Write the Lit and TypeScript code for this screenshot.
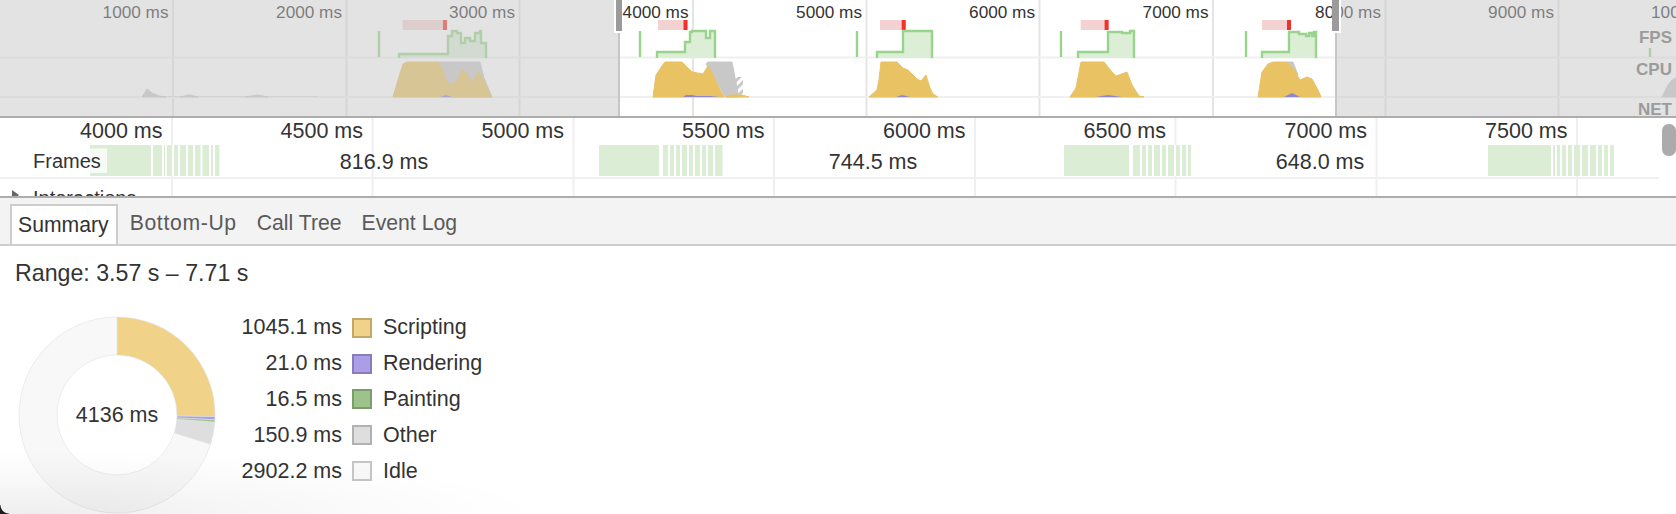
import { LitElement, html, svg, css } from "lit";
import { customElement } from "lit/decorators.js";

const overviewLines = [173, 346.5, 519.5, 693, 866.5, 1039.5, 1213, 1385.5, 1558.5, 1731];
const overviewLabels = overviewLines.map((x, i) => ({ x: x - 4.5, t: `${(i + 1) * 1000} ms` }));

const fps = [
  "M399 58V54H448V36H452V31H457V33H461V43H465V38H470V41H475V33H480V31H481V43H486V58",
  "M657 58V52H685V42H690V32H692V31H706V38H710V31H715V58",
  "M877 58V52H903V31H932V58",
  "M1078 58V52H1108V32H1122V33H1130V31H1134V58",
  "M1262 58V52H1289V32H1299V34H1306V36H1309V33H1312V36H1314V32H1316V58",
];
const spikes = [379, 640, 857, 1061, 1246, 1650];
const redBars = [
  [402.5, 447],
  [658, 687.5],
  [880, 905.7],
  [1080.7, 1108.6],
  [1262, 1291],
];

const yellow = [
  "393 97 398 80 403 64 407 62 438 62 443 70 447 83 453 84 458 79 462 70 466 72 473 83 478 71 484 80 489 92 492 97",
  "653 97 656 75 662 66 665 62 682 62 692 72 703 74 708 66 713 75 720 90 724 97",
  "869 97 877 90 879 80 881 62 897 62 903 68 908 70 917 79 921 81 926 75 930 88 933 94 938 97",
  "1070 97 1076 88 1081 62 1104 62 1112 72 1116 76 1127 72 1132 85 1139 96 1144 97",
  "1258 97 1262 72 1268 64 1273 62 1287 62 1293 68 1300 80 1307 77 1312 79 1318 90 1321 97",
  "726 97 731 95 742 95 749 97",
];
const grey = [
  "142 97 147 89 152 93 159 96 166 97",
  "180 97 189 95 198 97",
  "245 97 257 95 268 97",
  "160 97 160 96.4 318 96.4 318 97",
  "437 62 480 62 484 78 492 97 440 97",
  "706 64 708 62 732 62 738 93 739 97 725 97 713 75",
  "1287 62 1293 62 1298 75 1293 72",
  "1662 97 1668 85 1672 80 1676 78 1676 97",
];
const purple = [
  "683 97 686 95 692 95 697 96 710 96 720 97",
  "896 97 902 95 910 97",
  "1096 97 1108 95 1122 97",
  "1284 97 1292 93 1300 97",
  "440 97 446 95 452 97",
];

const rulerLines = [172, 372.5, 573.5, 774, 975, 1175.5, 1376.5, 1577];
const rulerLabels = rulerLines.map((x, i) => ({ x: x - 9.5, t: `${4000 + i * 500} ms` }));
const frameGroups = [
  { start: 90, end: 219.5, gaps: [151, 162, 165, 172, 178, 186, 193, 200.5, 209, 213] },
  { start: 599, end: 722.5, gaps: [659, 661, 668, 674, 680, 687, 693, 700, 706, 713] },
  { start: 1064, end: 1191, gaps: [1129, 1131, 1140, 1146, 1152, 1160, 1166, 1174, 1180, 1186] },
  { start: 1488, end: 1614, gaps: [1551, 1555, 1560, 1566, 1572, 1580, 1588, 1596, 1602, 1608] },
];
const durations = [
  { x: 384, t: "816.9 ms" },
  { x: 873, t: "744.5 ms" },
  { x: 1320, t: "648.0 ms" },
];

const legend = [
  { v: 1045.1, n: "Scripting", f: "#f0d289", b: "#c4a866" },
  { v: 21.0, n: "Rendering", f: "#ab9de6", b: "#8a7cb8" },
  { v: 16.5, n: "Painting", f: "#9dc28b", b: "#7e9b70" },
  { v: 150.9, n: "Other", f: "#dedede", b: "#b2b2b2" },
  { v: 2902.2, n: "Idle", f: "#f8f8f8", b: "#c5c5c5" },
];

function arc(a0: number, a1: number) {
  const R = 98, r = 60, c = 100;
  const pt = (rad: number, a: number) => `${(c + rad * Math.sin(a)).toFixed(2)} ${(c - rad * Math.cos(a)).toFixed(2)}`;
  const large = a1 - a0 > Math.PI ? 1 : 0;
  return `M${pt(R, a0)}A${R} ${R} 0 ${large} 1 ${pt(R, a1)}L${pt(r, a1)}A${r} ${r} 0 ${large} 0 ${pt(r, a0)}Z`;
}

@customElement("app-root")
export class AppRoot extends LitElement {
  static styles = css`
    :host {
      display: block;
      position: relative;
      width: 1676px;
      height: 514px;
      overflow: hidden;
      background: #fff;
      font-family: "Liberation Sans", Arial, sans-serif;
      color: #333;
    }
    svg { display: block; }
    .overview { border-bottom: 2px solid #adadad; }
    .ov-label { font-size: 17.2px; fill: #333; text-anchor: end; }
    .ov-name { font-size: 17px; font-weight: 700; fill: #9b9b9b; text-anchor: end; }
    .ov-line { stroke: #e4e4e4; stroke-width: 2; }
    .ov-h { stroke: #f0f0f0; stroke-width: 2; }
    .fps { fill: #dcefd6; stroke: #98d48c; stroke-width: 2.4; }
    .spike { stroke: #98d48c; stroke-width: 2.4; }
    .pink { fill: #f5d2d2; }
    .red { fill: #f2312a; }
    .yellow { fill: #e8c263; stroke: #e8c263; stroke-width: 1; stroke-linejoin: round; }
    .grey { fill: #c8c8c8; stroke: #c8c8c8; stroke-width: 1; stroke-linejoin: round; }
    .grey-thin { fill: #c8c8c8; }
    .purple { fill: #8f86cc; }
    .hatch { fill: url(#hatch); }
    .dim { fill: rgba(200, 200, 200, 0.5); }
    .edge { stroke: #c6c6c6; stroke-width: 2; }
    .grip-bg { fill: #fff; }
    .grip { fill: #9b9b9b; }

    .timeline { border-bottom: 2px solid #adadad; }
    .tl-line { stroke: #efefef; stroke-width: 2; }
    .tl-sep { stroke: #f0f0f0; stroke-width: 2; }
    .tl-label { font-size: 21.5px; fill: #333; text-anchor: end; }
    .tl-dur { font-size: 21.5px; fill: #333; text-anchor: middle; }
    .tl-name { font-size: 20px; fill: #333; }
    .frame { fill: #dcedd6; }
    .frame-gap { fill: #fff; }
    .label-bg { fill: rgba(255, 255, 255, 0.75); }
    .tri { fill: #666; }
    .scroll { fill: #ababab; }

    .tabs {
      display: flex;
      align-items: flex-end;
      box-sizing: border-box;
      height: 48px;
      padding-left: 10px;
      background: #f3f3f3;
      border-bottom: 2px solid #cdcdcd;
      font-size: 21.2px;
      color: #5a5a5a;
    }
    .tab {
      box-sizing: border-box;
      height: 42px;
      margin-bottom: -2px;
      padding: 0 10px;
      line-height: 38px;
      white-space: nowrap;
    }
    .tab.wide { letter-spacing: 0.65px; }
    .tab.active {
      color: #333;
      background: #fff;
      border: 2px solid #cdcdcd;
      padding: 0 7px 0 6px;
      margin-right: 2px;
    }
    .content { padding: 12px 0 0 15px; }
    .range { font-size: 23.2px; line-height: 30px; color: #333; white-space: nowrap; }
    .summary { display: flex; align-items: flex-start; margin-top: 22px; }
    .donut { position: relative; flex: none; width: 200px; height: 200px; margin: 5px 0 0 2px; }
    .donut-total {
      position: absolute;
      inset: 0;
      display: flex;
      align-items: center;
      justify-content: center;
      font-size: 21.5px;
      color: #333;
    }
    .seg { stroke: #e0e0e0; stroke-width: 0.6; }
    .legend {
      display: grid;
      grid-template-columns: 125px 20px auto;
      grid-auto-rows: 35.8px;
      align-items: center;
      font-size: 21.5px;
    }
    .val { text-align: right; white-space: nowrap; color: #333; }
    .swatch {
      box-sizing: border-box;
      width: 20px;
      height: 20px;
      margin-left: 10px;
      border: 2px solid;
    }
    .name { margin-left: 21px; white-space: nowrap; color: #333; }
    .shadow {
      position: absolute;
      left: 0;
      bottom: 0;
      width: 560px;
      height: 68px;
      pointer-events: none;
      background: radial-gradient(ellipse 510px 64px at 30px 100%, rgba(0, 0, 0, 0.065), rgba(0, 0, 0, 0.04) 35%, rgba(0, 0, 0, 0.016) 70%, rgba(0, 0, 0, 0) 100%);
    }
    .corner {
      position: absolute;
      left: 0;
      bottom: 0;
      width: 9px;
      height: 9px;
      background: radial-gradient(circle 9px at 100% 0, transparent 8px, #1a1a1a 9px);
    }
  `;

  private overview() {
    return html`<svg class="overview" width="1676" height="116" viewBox="0 0 1676 116">
      <defs>
        <pattern id="hatch" width="6" height="6" patternUnits="userSpaceOnUse" patternTransform="rotate(-45)">
          <rect width="6" height="3" fill="#c8c8c8"></rect>
        </pattern>
      </defs>
      ${overviewLines.map((x) => svg`<line class="ov-line" x1=${x} x2=${x} y1="0" y2="116"></line>`)}
      <line class="ov-h" x1="0" x2="1676" y1="57.5" y2="57.5"></line>
      <line class="ov-h" x1="0" x2="1676" y1="97" y2="97"></line>
      ${overviewLabels.map((l) => svg`<text class="ov-label" x=${l.x} y="18">${l.t}</text>`)}
      ${redBars.map(([a, b]) => svg`
        <rect class="pink" x=${a} y="20" width=${b - a} height="10"></rect>
        <rect class="red" x=${b - 4} y="20" width="4" height="10"></rect>`)}
      ${spikes.map((x, i) => svg`<line class="spike" x1=${x} x2=${x} y1=${i === 5 ? 48 : 31} y2="57"></line>`)}
      ${fps.map((d) => svg`<path class="fps" d=${d}></path>`)}
      ${grey.map((p) => svg`<polygon class=${p.includes("96.4") ? "grey-thin" : "grey"} points=${p}></polygon>`)}
      <polygon class="hatch" points="736 77 743 77 743 95 736 95"></polygon>
      ${yellow.map((p) => svg`<polygon class="yellow" points=${p}></polygon>`)}
      ${purple.map((p) => svg`<polygon class="purple" points=${p}></polygon>`)}
      <rect class="dim" x="0" y="0" width="619" height="116"></rect>
      <rect class="dim" x="1336" y="0" width="340" height="116"></rect>
      <line class="edge" x1="619" x2="619" y1="0" y2="116"></line>
      <line class="edge" x1="1336" x2="1336" y1="0" y2="116"></line>
      <rect class="grip-bg" x="614" y="0" width="8" height="33"></rect>
      <rect class="grip" x="616" y="0" width="6" height="31"></rect>
      <rect class="grip-bg" x="1332" y="0" width="9" height="33"></rect>
      <rect class="grip" x="1332" y="0" width="7" height="31"></rect>
      <text class="ov-name" x="1672" y="43">FPS</text>
      <text class="ov-name" x="1672" y="75">CPU</text>
      <text class="ov-name" x="1672" y="115">NET</text>
    </svg>`;
  }

  private timeline() {
    return html`<svg class="timeline" width="1676" height="78" viewBox="0 118 1676 78">
      ${rulerLines.map((x) => svg`<line class="tl-line" x1=${x} x2=${x} y1="118" y2="196"></line>`)}
      <line class="tl-sep" x1="0" x2="1659" y1="178" y2="178"></line>
      ${rulerLabels.map((l) => svg`<text class="tl-label" x=${l.x} y="138">${l.t}</text>`)}
      ${frameGroups.map((g) => svg`
        <rect class="frame" x=${g.start} y="145" width=${g.end - g.start} height="31"></rect>
        ${g.gaps.map((x) => svg`<rect class="frame-gap" x=${x} y="145" width="2" height="31"></rect>`)}`)}
      <rect class="label-bg" x="0" y="148.5" width="107" height="24.5"></rect>
      <text class="tl-name" x="33" y="168">Frames</text>
      ${durations.map((d) => svg`<text class="tl-dur" x=${d.x} y="169">${d.t}</text>`)}
      <polygon class="tri" points="12 190 19 195 12 200"></polygon>
      <text class="tl-name" x="33" y="205">Interactions</text>
      <rect class="scroll" x="1662" y="124" width="14" height="32" rx="6.5"></rect>
    </svg>`;
  }

  private donut() {
    const total = legend.reduce((s, l) => s + l.v, 0);
    let a = 0;
    return html`<div class="donut">
      <svg width="200" height="200" viewBox="0 0 200 200">
        ${legend.map((l) => {
          const a0 = a;
          a += (l.v / total) * Math.PI * 2;
          return svg`<path class="seg" d=${arc(a0, a)} fill=${l.f}></path>`;
        })}
      </svg>
      <div class="donut-total">4136 ms</div>
    </div>`;
  }

  render() {
    return html`
      ${this.overview()}
      ${this.timeline()}
      <div class="tabs">
        <div class="tab active">Summary</div>
        <div class="tab wide">Bottom-Up</div>
        <div class="tab">Call Tree</div>
        <div class="tab">Event Log</div>
      </div>
      <div class="content">
        <div class="range">Range: 3.57 s – 7.71 s</div>
        <div class="summary">
          ${this.donut()}
          <div class="legend">
            ${legend.map(
              (l) => html`
                <div class="val">${l.v.toFixed(1)} ms</div>
                <div class="swatch" style="background:${l.f};border-color:${l.b}"></div>
                <div class="name">${l.n}</div>
              `
            )}
          </div>
        </div>
      </div>
      <div class="shadow"></div>
      <div class="corner"></div>
    `;
  }
}
